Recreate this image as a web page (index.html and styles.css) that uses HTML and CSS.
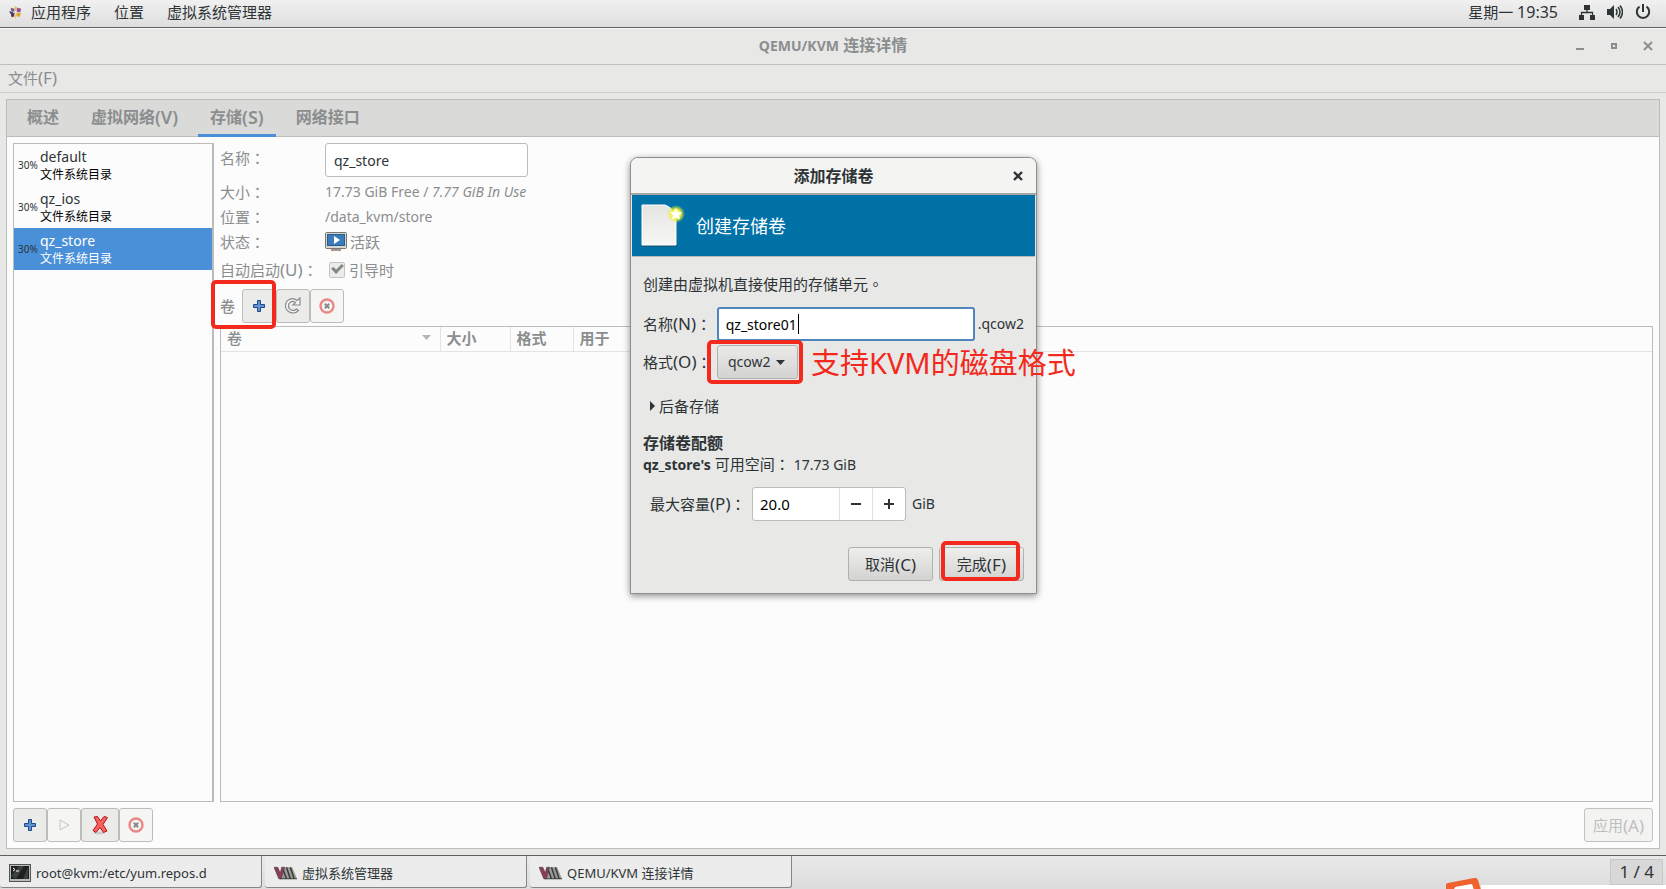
FILE: index.html
```html
<!DOCTYPE html>
<html lang="zh-CN">
<head>
<meta charset="utf-8">
<title>QEMU/KVM 连接详情</title>
<link rel="stylesheet" href="styles.css">
</head>
<body>
<svg class="defs" width="0" height="0" aria-hidden="true">
  <symbol id="plus" viewBox="0 0 16 16"><path d="M6.5 2.5h3v4h4v3h-4v4h-3v-4h-4v-3h4z" fill="#5d93d6" stroke="#204a87" stroke-linejoin="round"/></symbol>
  <symbol id="stop" viewBox="0 0 16 16"><circle cx="8" cy="8" r="6.500" fill="#f6f6f6" stroke="#ea8787" stroke-width="2.4"/><path d="M5.8 5.8l4.400 4.400M10.200 5.800l-4.400 4.400" stroke="#858a86" stroke-width="2"/></symbol>
  <symbol id="vmm" viewBox="0 0 24 14"><path d="M5 13L9 1h10l5 12z" fill="#9c9c9a"/><path d="M9 2l4 11M13 1l4 12M17 1l4 12" stroke="#3c3c3c" stroke-width="1.600"/><path d="M0 1h4l2.500 6L8 1h3L7.500 13H5z" fill="#8b3f55" stroke="#4b3a40" stroke-width=".6"/><path d="M6 13h18" stroke="#333"/></symbol>
</svg>

<header class="topbar">
  <svg class="logo" viewBox="0 0 16 16"><path d="M7 1l3 2-2 4z" fill="#e9b83f"/><path d="M3 3l4 1v3L3 6z" fill="#83618f"/><path d="M1 7l5 0-2 4z" fill="#4a3c6d"/><path d="M10 3l4 1-1 4-4-1z" fill="#9a4c8e"/><path d="M3 10l4-2 0 4-3 1z" fill="#3d315b"/><path d="M7 9l3 2-2 4-2-3z" fill="#f3c08f"/><path d="M9 8l5 1-2 4-3-2z" fill="#d9a62c"/></svg>
  <a href="#">应用程序</a>
  <a href="#">位置</a>
  <a href="#">虚拟系统管理器</a>
  <div class="status">
    <span class="clock">星期一 <span class="time">19:35</span></span>
    <svg width="16" height="16" viewBox="0 0 16 16" fill="#2e3436"><path d="M5 1h6v5H5zM0 11h5v5H0zM11 11h5v5h-5z"/><path d="M8 5v4M2.5 12V8.5h11V12" fill="none" stroke="#2e3436" stroke-width="1.3"/></svg>
    <svg width="16" height="16" viewBox="0 0 16 16" fill="#2e3436"><path d="M0 5h3l4-4v14l-4-4H0z"/><path d="M9 5q2 3 0 6M11 3q4 5 0 10M13 1.500q5 6.500 0 13" fill="none" stroke="#2e3436" stroke-width="1.5"/></svg>
    <svg width="16" height="16" viewBox="0 0 16 16" fill="none" stroke="#2e3436" stroke-width="2"><path d="M8 0v8M4.500 2.700a6.200 6.200 0 1 0 7 0"/></svg>
  </div>
</header>

<div class="titlebar">
  <h1><span class="latin">QEMU/KVM</span> 连接详情</h1>
  <div class="winctl">
    <button type="button" aria-label="最小化"><svg width="10" height="10" viewBox="0 0 10 10"><path d="M1 7h8v2H1z" fill="#8b8e8f"/></svg></button>
    <button type="button" aria-label="最大化"><svg width="10" height="10" viewBox="0 0 10 10"><path d="M3 3h4v4H3z" fill="none" stroke="#8b8e8f" stroke-width="2"/></svg></button>
    <button type="button" aria-label="关闭"><svg width="10" height="10" viewBox="0 0 10 10"><path d="M1 1l8 8M9 1L1 9" stroke="#8b8e8f" stroke-width="2"/></svg></button>
  </div>
</div>
<nav class="menubar"><a href="#">文件<span class="key">(F)</span></a></nav>

<main class="window">
  <div class="notebook">
    <div class="tabs" role="tablist">
      <button type="button" role="tab">概述</button>
      <button type="button" role="tab">虚拟网络<span class="key">(V)</span></button>
      <button type="button" role="tab" class="active" aria-selected="true">存储<span class="key">(S)</span></button>
      <button type="button" role="tab">网络接口</button>
    </div>
    <div class="page">
      <div class="panes">
        <ul class="pools">
          <li><span class="pct">30%</span><div><b>default</b><small>文件系统目录</small></div></li>
          <li><span class="pct">30%</span><div><b>qz_ios</b><small>文件系统目录</small></div></li>
          <li class="selected"><span class="pct">30%</span><div><b>qz_store</b><small>文件系统目录</small></div></li>
        </ul>
        <section class="detail">
          <div class="form">
            <label for="pool-name" class="row-name">名称<span class="punct" lang="zh-TW">：</span></label>
            <input id="pool-name" class="entry" value="qz_store">
            <span>大小<span class="punct" lang="zh-TW">：</span></span>
            <span class="latin">17.73 GiB Free / <i>7.77 GiB In Use</i></span>
            <span>位置<span class="punct" lang="zh-TW">：</span></span>
            <span class="latin">/data_kvm/store</span>
            <span>状态<span class="punct" lang="zh-TW">：</span></span>
            <span class="state"><svg width="22" height="20" viewBox="0 0 22 20"><path d="M6 17h10v2H6z" fill="#a8978a"/><rect x=".5" y=".5" width="21" height="16" rx="1" fill="#d6d6d2" stroke="#777"/><rect x="2.500" y="2.500" width="17" height="11" fill="#3a7cb8" stroke="#2b5d8c"/><path d="M9 4l6 4-6 4z" fill="#fff"/></svg>活跃</span>
            <span class="auto">自动启动<span class="key">(U)</span><span class="punct" lang="zh-TW">：</span></span>
            <label class="check"><input type="checkbox" checked>引导时</label>
          </div>
          <div class="toolbar">
            <span class="vol-label marked">卷</span>
            <div class="linked">
              <button type="button" aria-label="添加卷"><svg width="16" height="16"><use href="#plus"/></svg></button>
              <button type="button" aria-label="刷新"><svg width="18" height="18" viewBox="0 0 18 18"><path d="M13 3.500L16 1v7H9l2.500-2.500C8 3 4 5.500 4.500 9.500c.5 4 5.500 5 8 2.500l2 1.500C10.500 18 2.500 16 1.500 9.500 1 3 8-.5 13 3.500z" fill="#f4f4f4" stroke="#888b8b" stroke-width="1.200"/></svg></button>
              <button type="button" disabled aria-label="删除卷"><svg width="16" height="16"><use href="#stop"/></svg></button>
            </div>
          </div>
          <div class="volumes">
            <table>
              <thead><tr>
                <th class="c-vol"><div>卷<svg width="9" height="5" viewBox="0 0 9 5"><path d="M0 0h9L4.500 5z" fill="#b5b7b5"/></svg></div></th>
                <th class="c-size">大小</th><th class="c-fmt">格式</th><th>用于</th>
              </tr></thead>
            </table>
          </div>
        </section>
      </div>
      <div class="actions">
        <div class="linked">
          <button type="button" aria-label="添加池"><svg width="16" height="16"><use href="#plus"/></svg></button>
          <button type="button" disabled aria-label="启动池"><svg width="16" height="16" viewBox="0 0 16 16"><path d="M4 3l9 5-9 5z" fill="#f4f4f4" stroke="#c4c6c4"/></svg></button>
          <button type="button" class="wide" aria-label="停止池"><svg width="20" height="20" viewBox="0 0 20 20"><ellipse cx="9" cy="18" rx="6" ry="1.500" fill="#ccc"/><path d="M4 2l3.500-.5L10.500 6 14 1.500l3.500 1L13 9.500l4 6.500-3.500 1.500L10 12.500 6 17.500 3 15.500 7.500 9z" fill="#f7615f" stroke="#b31416"/></svg></button>
          <button type="button" disabled aria-label="删除池"><svg width="16" height="16"><use href="#stop"/></svg></button>
        </div>
        <button type="button" class="apply" disabled>应用<span class="key">(A)</span></button>
      </div>
    </div>
  </div>
</main>

<footer class="taskbar">
  <button type="button" class="task"><svg width="22" height="18" viewBox="0 0 22 18"><rect x=".5" y=".5" width="21" height="17" fill="#b9bbb9" stroke="#555"/><rect x="2" y="2" width="18" height="13" fill="#1d2021"/><path d="M2 12l8-10h5l-8 13zM14 15l5-12v12z" fill="#3a4140"/><path d="M4 4l2 1.500L4 7M7 7h3" fill="none" stroke="#fff"/></svg>root@kvm:/etc/yum.repos.d</button>
  <button type="button" class="task"><svg width="23" height="14"><use href="#vmm"/></svg>虚拟系统管理器</button>
  <button type="button" class="task"><svg width="23" height="14"><use href="#vmm"/></svg>QEMU/KVM 连接详情</button>
  <span class="workspace">1 / 4</span>
  <div class="overlay-strip"><svg width="36" height="11" viewBox="0 0 36 11"><path d="M1 12V7q0-2 2-2L29 0q3-.5 4 2l3 10z" fill="#f0622d"/><path d="M9 12q0-3 3-3.500L27 6l2 6z" fill="#fff"/></svg></div>
</footer>

<div class="dialog" role="dialog" aria-labelledby="dlg-title">
  <div class="dlg-title"><h2 id="dlg-title">添加存储卷</h2>
    <button type="button" aria-label="关闭"><svg width="10" height="10" viewBox="0 0 10 10"><path d="M1 1l8 8M9 1L1 9" stroke="#2e3436" stroke-width="2.400"/></svg></button>
  </div>
  <div class="banner">
    <svg width="46" height="46" viewBox="0 0 46 46">
      <defs><linearGradient id="pg" x2="0" y2="1"><stop offset="0" stop-color="#e4e4e2"/><stop offset="1" stop-color="#f7f7f6"/></linearGradient><radialGradient id="gl"><stop offset=".5" stop-color="#f4f43a"/><stop offset="1" stop-color="#e8ee20" stop-opacity="0"/></radialGradient></defs>
      <path d="M2 3h25q5 2 10 12v29H2z" fill="#16587c"/><path d="M2 2h23q8 3 11 11v29H2z" fill="url(#pg)" stroke="#fff"/><circle cx="36" cy="11" r="9" fill="url(#gl)"/><path d="M36 5l2 4 4 .5-3 3 1 4-4-2-4 2 1-4-3-3 4-.5z" fill="#fff"/>
    </svg>
    <span>创建存储卷</span>
  </div>
  <form class="dlg-body">
    <p class="desc">创建由虚拟机直接使用的存储单元<span class="punct" lang="zh-TW">。</span></p>
    <div class="field name-row"><label for="vol-name">名称<span class="key">(N)</span><span class="punct" lang="zh-TW">：</span></label>
      <div class="focus-entry"><input id="vol-name" value="qz_store01"><span class="caret"></span></div><span class="latin">.qcow2</span></div>
    <div class="field fmt-row"><label for="vol-fmt">格式<span class="key">(O)</span><span class="punct" lang="zh-TW">：</span></label>
      <div class="combo marked"><select id="vol-fmt"><option>qcow2</option></select>
        <svg width="9" height="5" viewBox="0 0 9 5"><path d="M0 0h9L4.500 5z" fill="#2e3436"/></svg>
        <span class="note">支持KVM的磁盘格式</span></div></div>
    <button type="button" class="expander"><svg width="5" height="10" viewBox="0 0 5 10"><path d="M0 0l5 5-5 5z" fill="#2e3436"/></svg>后备存储</button>
    <h3>存储卷配额</h3>
    <p class="avail"><b>qz_store's</b> 可用空间<span class="punct" lang="zh-TW">：</span> <span class="latin">17.73 GiB</span></p>
    <div class="field cap-row"><label for="cap">最大容量<span class="key">(P)</span><span class="punct" lang="zh-TW">：</span></label>
      <div class="spin"><input id="cap" value="20.0">
        <button type="button" aria-label="减少"><svg width="10" height="10" viewBox="0 0 10 10"><path d="M0 4h10v2H0z" fill="#2e3436"/></svg></button>
        <button type="button" aria-label="增加"><svg width="10" height="10" viewBox="0 0 10 10"><path d="M0 4h10v2H0zM4 0h2v10H4z" fill="#2e3436"/></svg></button></div>
      <span class="latin">GiB</span></div>
    <div class="dlg-actions"><button type="button">取消<span class="key">(C)</span></button><button type="button" class="marked">完成<span class="key">(F)</span></button></div>
  </form>
</div>
</body>
</html>
```

FILE: styles.css
```css
*, *::before, *::after { box-sizing: border-box; }
body, h1, h2, h3, p, ul { margin: 0; padding: 0; }
body {
  height: 100vh;
  display: flex;
  flex-direction: column;
  position: relative;
  overflow: hidden;
  background: #e8e8e7;
  color: #2e3436;
  font: 15px/22px "Noto Sans", "Noto Sans CJK SC", sans-serif;
}
button, input, select { font: inherit; color: inherit; margin: 0; }
button { padding: 0; border: 0; background: none; display: flex; align-items: center; justify-content: center; }
a { color: inherit; text-decoration: none; }
svg { flex: none; display: block; }
.defs { position: absolute; }
.punct { font-family: "Noto Sans CJK TC", sans-serif; line-height: 1; }
.latin { font-size: 14px; }
.key { font-size: 17px; line-height: 1; }

.topbar {
  height: 28px;
  flex: none;
  display: flex;
  align-items: center;
  padding: 0 15px 3px 8px;
  background: linear-gradient(#f0f0f0, #dedede);
  border-bottom: 1px solid #606060;
}
.logo { width: 15px; height: 15px; margin-right: 8px; }
.topbar a { margin-right: 23px; }
.status { margin-left: auto; display: flex; align-items: center; gap: 12px; }
.clock { margin-right: 9px; }
.time { font-size: 16px; line-height: 1; }

.titlebar {
  height: 37px;
  flex: none;
  position: relative;
  display: flex;
  align-items: center;
  justify-content: center;
  padding-bottom: 2px;
  border-bottom: 1px solid #bfbfbe;
  border-top: 1px solid #f8f8f8;
  color: #8b8e8f;
}
.titlebar h1 { font-size: 16px; font-weight: 700; }
.winctl { position: absolute; right: 13px; display: flex; gap: 24px; }
.menubar { height: 28px; flex: none; padding: 2px 8px; border-bottom: 1px solid #cfcfce; color: #8b8e8f; }

.window { flex: 1; min-height: 0; display: flex; padding: 6px; }
.notebook { flex: 1; display: flex; flex-direction: column; border: 1px solid #bcbcbb; background: #fcfcfc; }
.tabs { height: 37px; flex: none; display: flex; gap: 8px; padding: 0 8px; background: #dadad8; border-bottom: 1px solid #bcbcbb; }
.tabs button { height: 37px; padding: 3px 12px; border-bottom: 3px solid transparent; color: #8b8e8f; font-size: 16px; font-weight: 700; }
.tabs .active { border-color: #4a90d9; }
.tabs .key { font-size: 18px; font-weight: 600; }

.page { flex: 1; min-height: 0; display: flex; flex-direction: column; gap: 6px; padding: 6px; }
.panes { flex: 1; min-height: 0; display: flex; gap: 6px; }
.pools { width: 201px; flex: none; list-style: none; border: 1px solid #bcbcbb; border-right-width: 2px; }
.pools li { height: 42px; display: flex; align-items: center; gap: 4px; padding-left: 4px; color: #000; }
.pools b, .pools small { display: block; font-weight: 400; line-height: 18px; }
.pools b { font-size: 14px; color: #2e3436; }
.pools small { font-size: 12px; line-height: 17px; }
.pct { width: 18px; font-size: 10px; line-height: 14px; white-space: nowrap; color: #2e3436; }
.pools .selected { background: #4a90d9; color: #fff; }
.pools .selected b { color: #fff; }

.detail { flex: 1; min-width: 0; display: flex; flex-direction: column; color: #8b8e8f; }
.form { display: grid; grid-template-columns: 105px 1fr; grid-template-rows: 36px 25px 25px 25px 31px; align-items: center; }
.row-name { align-self: start; padding-top: 4px; }
.entry { width: 203px; height: 34px; padding: 0 8px; border: 1px solid #bcbcbb; border-radius: 3px; background: #fff; color: #2e3436; font-size: 14px; align-self: start; }
.state, .check { display: flex; align-items: center; gap: 3px; }
.check { padding-left: 4px; gap: 4px; }
.check input {
  appearance: none;
  width: 16px;
  height: 16px;
  display: grid;
  place-items: center;
  border: 1px solid #c4c4c2;
  border-radius: 2px;
  background: #ececeb;
}
.check input::after { content: ""; width: 11px; height: 7px; border: solid #858786; border-width: 0 0 3px 3px; rotate: -45deg; translate: 0 -2px; }
.toolbar { display: flex; align-items: center; gap: 7px; height: 34px; margin: 4px 0 3px; }
.linked { display: flex; }
.linked button { width: 34px; height: 34px; border: 1px solid #bcbcbb; border-radius: 3px; background: #ebebea; }
.linked button:disabled { background: #f5f5f4; }
.linked .wide { width: 38px; }

.marked { position: relative; }
.marked::after { content: ""; position: absolute; border: 4px solid #f3291d; border-radius: 5px; pointer-events: none; z-index: 1; }
.vol-label { font-weight: 500; }
.vol-label.marked::after { top: -15px; left: -9px; width: 65px; height: 49px; }

.volumes { flex: 1; border: 1px solid #bcbcbb; }
table { width: 100%; border-collapse: collapse; table-layout: fixed; }
th { height: 24px; padding: 0 6px 2px; line-height: 20px; text-align: left; font-weight: 700; border-right: 1px solid #e3e3e2; border-bottom: 1px solid #e3e3e2; }
th:last-child { border-right: 0; }
th div { display: flex; align-items: center; justify-content: space-between; font-weight: 500; }
.c-vol { width: 219px; padding-right: 9px; }
.c-size { width: 70px; }
.c-fmt { width: 63px; }

.actions { display: flex; justify-content: space-between; height: 34px; }
.apply { padding: 0 8px; border: 1px solid #c2c2c1; border-radius: 3px; background: #f3f3f2; color: #bdbfbe; }

.taskbar { height: 34px; flex: none; position: relative; display: flex; gap: 3px; padding: 0 3px 1px 0; border-top: 1px solid #606060; background: linear-gradient(#e9e9e9, #dcdcdc); }
.task { width: 262px; justify-content: flex-start; gap: 5px; padding: 2px 0 0 9px; font-size: 13px; background: #ececec; border: solid #858585; border-width: 0 1px 1px 0; border-radius: 0 0 3px 3px; }
.workspace { margin-left: auto; align-self: flex-start; margin-top: 3px; height: 26px; padding: 1px 8px; border: 1px solid #c8c8c8; background: #d8d8d8; font-size: 17px; }
.overlay-strip { position: absolute; right: 0; bottom: 0; width: 185px; height: 4px; background: #fff; }
.overlay-strip svg { position: absolute; left: -36px; bottom: 0; }

.dialog {
  position: absolute;
  left: 630px;
  top: 157px;
  width: 407px;
  border: 1px solid #8f8f8f;
  border-radius: 8px 8px 0 0;
  background: #e8e8e7;
  box-shadow: 0 2px 7px rgba(0, 0, 0, .45);
}
.dlg-title { height: 37px; display: flex; align-items: center; justify-content: center; position: relative; background: #f4f4f3; border-radius: 7px 7px 0 0; border-bottom: 2px solid #a7a7a5; }
.dlg-title h2 { font-size: 16px; font-weight: 700; }
.dlg-title button { position: absolute; right: 13px; }
.banner { height: 62px; margin: 0 1px; display: flex; align-items: center; gap: 10px; padding: 0 8px; background: #0072a8; border-bottom: 1px solid #b9b9b7; color: #fff; font-size: 18px; }
.dlg-body { padding: 16px 12px 12px; }
.desc { margin-bottom: 12px; }
.field { display: flex; align-items: center; height: 34px; }
.name-row label, .fmt-row label { width: 74px; white-space: nowrap; }
.focus-entry { position: relative; flex: none; width: 258px; margin-right: 3px; }
.focus-entry input { width: 100%; height: 34px; padding: 0 7px; border: 2px solid #4f86bd; border-radius: 3px; background: #fff; color: #000; font-size: 14px; outline: none; }
.caret { position: absolute; left: 81px; top: 7px; width: 1px; height: 20px; background: #000; }
.fmt-row { margin-top: 4px; }
.combo { width: 81px; height: 34px; flex: none; }
.combo select { appearance: none; width: 100%; height: 34px; padding: 0 10px; border: 1px solid #b0b0ae; border-radius: 3px; background: linear-gradient(#eaeae9, #d3d3d2); font-size: 14px; }
.combo svg { position: absolute; right: 13px; top: 15px; }
.combo.marked::after { inset: -5px -5px -5px -10px; }
.note { position: absolute; left: 94px; top: -3px; z-index: 2; white-space: nowrap; color: #f3291d; font-size: 29px; line-height: 42px; }
.expander { margin: 16px 0 16px 7px; gap: 4px; height: 22px; }
h3 { font-size: 16px; font-weight: 700; line-height: 21px; }
.avail { font-size: 15px; line-height: 20px; }
.avail b { font-size: 14px; }
.cap-row { margin-top: 12px; padding-left: 7px; }
.cap-row label { width: 102px; white-space: nowrap; }
.spin { display: flex; width: 154px; height: 34px; margin-right: 6px; border: 1px solid #bcbcbb; border-radius: 3px; background: #fff; overflow: hidden; }
.spin input { flex: 1; min-width: 0; padding: 0 7px; border: 0; background: none; color: #000; }
.spin button { width: 33px; border-left: 1px solid #e0e0de; }
.dlg-actions { display: flex; justify-content: flex-end; gap: 6px; margin-top: 26px; }
.dlg-actions button { width: 85px; height: 34px; border: 1px solid #b0b0ae; border-radius: 3px; background: linear-gradient(#eeeeed, #d3d3d2); }
.dlg-actions .marked::after { inset: -7px 3px -1px 1px; }
```
